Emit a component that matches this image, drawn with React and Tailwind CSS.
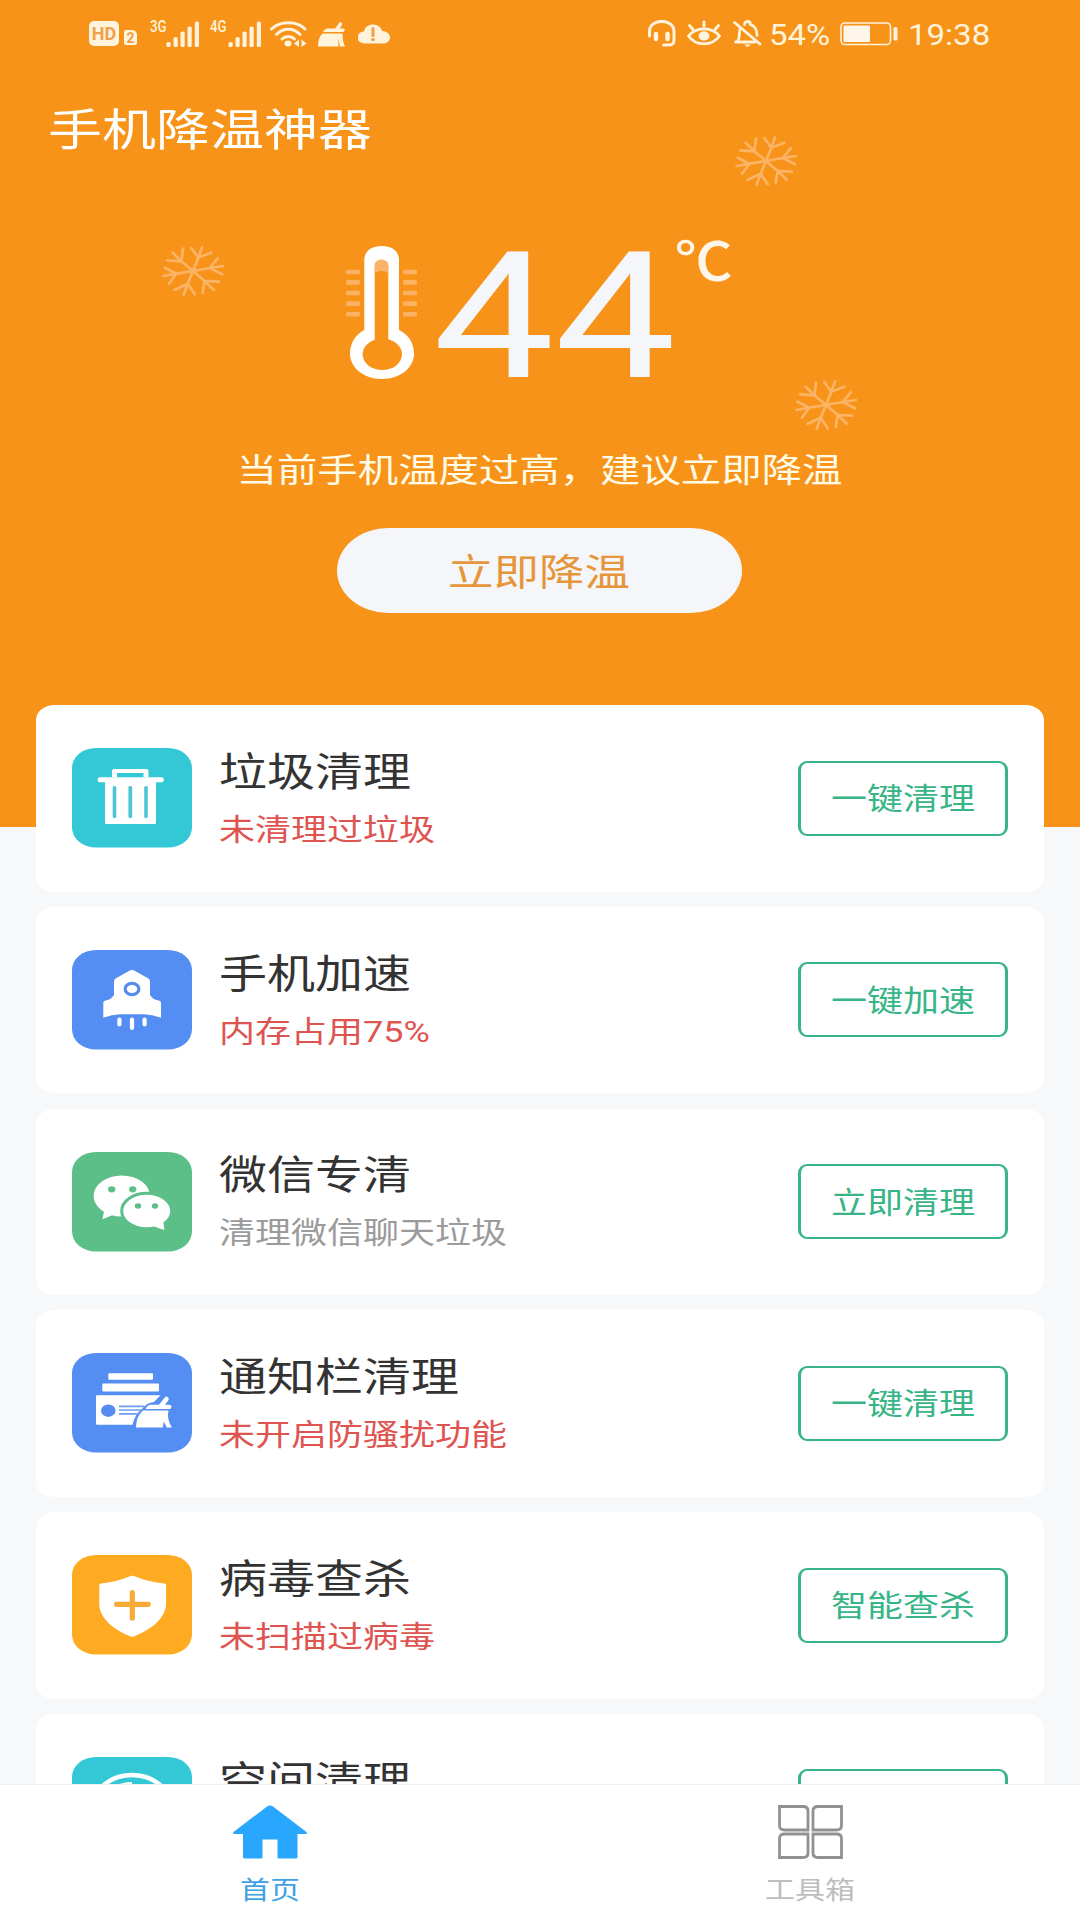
import { useState } from "react";

const ORANGE = "#f79319";
const CREAM = "#fff3dc";

function Label({ className = "", children }) {
  return (
    <span className={`inline-block whitespace-nowrap pt-[3px] leading-none scale-y-82 ${className}`}>
      {children}
    </span>
  );
}

function SignalBars() {
  return (
    <svg width="34" height="26" viewBox="0 0 34 26" fill={CREAM}>
      <rect x="0.5" y="21" width="4.2" height="5" rx="1.6" />
      <rect x="7.5" y="16" width="4.2" height="10" rx="1.6" />
      <rect x="14.5" y="10.5" width="4.2" height="15.5" rx="1.6" />
      <rect x="21.5" y="5.5" width="4.2" height="20.5" rx="1.6" />
      <rect x="28.8" y="0.5" width="4.2" height="25.5" rx="1.6" />
    </svg>
  );
}

function NetworkType({ className = "", children }) {
  return (
    <div className={`-mt-[13px] ${className}`}>
      <span className="inline-block origin-left scale-x-78 text-[17px] font-medium leading-none">
        {children}
      </span>
    </div>
  );
}

function StatusBar() {
  return (
    <div className="flex h-[67px] items-center justify-between pl-[89px] pr-[89px] text-[#fff3dc]">
      <div className="flex items-center">
        <div className="flex h-[25px] w-[30px] items-center justify-center rounded-[5px] bg-[#fff3dc]">
          <span className="text-[18px] font-bold leading-none text-[#f0a04a]">HD</span>
        </div>
        <div className="mt-2 ml-[5px] flex h-[15px] w-[13px] items-center justify-center rounded-[2px] rounded-tr-[5px] bg-[#fff3dc]">
          <span className="text-[14px] font-bold leading-none text-[#f0a04a]">2</span>
        </div>
        <NetworkType className="ml-[13px] w-[16px]">3G</NetworkType>
        <SignalBars />
        <NetworkType className="ml-[10px] w-[18px]">4G</NetworkType>
        <SignalBars />
        <svg className="ml-[8px]" width="37" height="26" viewBox="0 0 37 26" fill="none" stroke={CREAM} strokeLinecap="round">
          <path d="M1.500 8C10 -0.500 27 -0.500 35 8" strokeWidth="3" />
          <path d="M6.500 13.500C13 6.500 24 6.500 30 13.500" strokeWidth="3" />
          <path d="M12 18C15.500 14.500 21 14.500 24.500 18" strokeWidth="3" />
          <ellipse cx="18" cy="22.500" rx="3.500" ry="2.900" fill={CREAM} stroke="none" />
          <path d="M29 18.500v7.500l-5-3.500zM31.500 18.500v7.500l5-3.500z" fill={CREAM} stroke="none" />
        </svg>
        <svg className="ml-[11px]" width="28" height="26" viewBox="0 0 28 26" fill={CREAM}>
          <path d="M22.500 3L18.500 9" stroke={CREAM} strokeWidth="3.600" strokeLinecap="round" />
          <path d="M9 7.500h17q1.500 1.500-.5 3.500H5q1-3 4-3.500z" />
          <path d="M4.500 12.500h20q0 8 2.500 13h-5l-2-8 .5 8H0q0-9 4.500-13z" />
        </svg>
        <svg className="mt-[1px] ml-[12px]" width="32" height="20" viewBox="0 0 32 20" fill={CREAM}>
          <path d="M7 19.500a7 6 0 0 1-1-12C7 2.500 11 .5 15 .5c5 0 8.500 3 9 6.500 5 0 8 3 8 6.500s-3 6-7 6z" />
          <path d="M15 4.500v7" stroke="#f0a04a" strokeWidth="3" strokeLinecap="round" />
          <circle cx="15" cy="15.500" r="1.800" fill="#f0a04a" />
        </svg>
      </div>

      <div className="flex items-center">
        <svg width="29" height="27" viewBox="0 0 29 27" fill="none" stroke={CREAM} strokeWidth="3" strokeLinecap="round">
          <path d="M1.500 16V11.500C1.500 -2 26 -2 26 11.500V20c0 3.500-2 5-5 5H15.500" />
          <path d="M8 14v5M19.500 14v5" strokeWidth="4.500" />
        </svg>
        <svg className="ml-[10px]" width="34" height="27" viewBox="0 0 34 27" fill="none" stroke={CREAM} strokeWidth="2.800" strokeLinecap="round">
          <path d="M1.500 16C9 6.500 25 6.500 32.500 16 25 26.500 9 26.500 1.500 16z" />
          <path d="M17 7V2M6 9.500L2.500 5.500M28 9.500l3.500-4" />
          <ellipse cx="17" cy="16" rx="5.500" ry="4.700" fill={CREAM} stroke="none" />
        </svg>
        <svg className="ml-[12px]" width="29" height="27" viewBox="0 0 29 27" fill="none" stroke={CREAM} strokeWidth="2.800" strokeLinecap="round">
          <path d="M1.500 2.500L27 24" />
          <path d="M2.500 22h19.500M4.500 21.500c3-4 1-8 2.500-12M11.500 4.500c0-4 6-4 6 0 5 2 6.500 5 6.500 11" />
          <path d="M11 24.500h7l-3.500 2.500z" fill={CREAM} stroke="none" />
        </svg>
        <Label className="ml-[7px] w-[62px] pt-[1px] text-[33px] scale-y-88">54%</Label>
        <svg className="mt-[1px] ml-[9px]" width="59" height="24" viewBox="0 0 59 24" fill="none">
          <rect x="1" y="1" width="49.500" height="21.500" rx="4" stroke={CREAM} strokeWidth="1.600" />
          <rect x="3.500" y="3.500" width="26.500" height="16.500" rx="1" fill="#fff6ea" />
          <rect x="53.500" y="5" width="4" height="13.500" rx="1.500" fill={CREAM} />
        </svg>
        <Label className="ml-[9px] w-[83px] pt-[1px] text-[33px] scale-y-88">19:38</Label>
      </div>
    </div>
  );
}

function Snowflake({ className }) {
  return (
    <svg
      className={`absolute ${className}`}
      width="62"
      height="50"
      viewBox="0 0 62 50"
      fill="none"
      stroke="#fbb466"
      strokeWidth="2.700"
      strokeLinecap="round"
    >
      <path d="M31 25L36.300 11.700 40 1.500M29.300 2l7 9.700 13-5" />
      <path d="M31 25l16.700-3L61 20M55.700 12.300l-8 9.700L60 28.300" />
      <path d="M31 25l11.700 10 9 8.700M57 35.700L42.700 35l-2 12" />
      <path d="M31 25l-5.300 12.700L21.700 48.500M32.700 48.300l-7-10.600-13 6" />
      <path d="M31 25l-16.700 2.700L1.500 30M2.700 21.700l11.600 6L7 37.700" />
      <path d="M31 25L19.300 15.300 10.700 6.700M21 2.700l-1.700 12.600-14-1" />
    </svg>
  );
}

function Thermometer() {
  const ticks = [26, 36.4, 47, 57.6, 68.2];
  return (
    <svg width="71" height="134" viewBox="0 0 71 134">
      <path
        d="M18.300 84V14.500C18.300 5 25 0 35.700 0S53 5 53 14.500V84C62 88 68 97 68 107.500 68 122 54 133 36 133S4 122 4 107.500C4 97 10 88 18.300 84z"
        fill="#fff"
      />
      <path d="M28.700 94V20c0-8.500 13.600-8.500 13.600 0v74z" fill={ORANGE} />
      <ellipse cx="36.300" cy="108.300" rx="19.700" ry="15.700" fill={ORANGE} />
      <path d="M28.700 29V20c0-8.500 13.600-8.500 13.600 0v9c-1-5.500-12.600-5.500-13.600 0z" fill="#fab168" />
      {ticks.map((y) => (
        <g key={y} fill="#fcb263">
          <rect x="0" y={y - 2.3} width="14" height="4.600" rx="1.500" />
          <rect x="57" y={y - 2.3} width="14" height="4.600" rx="1.500" />
        </g>
      ))}
    </svg>
  );
}

function TrashIcon() {
  return (
    <g fill="#fff">
      <path d="M42 21h32.500q2 0 2 2v6.300h-5V25H45v4.300h-5V23q0-2 2-2z" />
      <rect x="25.700" y="29.300" width="66" height="5" rx="2" />
      <path d="M33 33h51v41.500q0 1.500-1.500 1.500h-48Q33 76 33 74.500z" />
      <g fill="#4fc4d2">
        <rect x="40.700" y="38" width="3.600" height="32" rx="1.500" />
        <rect x="56.400" y="38" width="3.800" height="32" rx="1.500" />
        <rect x="72.200" y="38" width="3.600" height="32" rx="1.500" />
      </g>
    </g>
  );
}

function RocketIcon() {
  return (
    <g fill="#fff">
      <path d="M60 20q1.500 0 3 1l13.500 7.500q1.500 1 1.500 3V45q3 5 9.500 5.700 1.500.3 1.500 2V67.800Q80 64.500 72 64.300H48q-8 .2-16.700 3.500V52.700q0-1.700 1.500-2Q39 50 42 45V31.500q0-2 1.500-3L57 21q1.500-1 3-1z" />
      <ellipse cx="60" cy="39" rx="6.900" ry="5.600" stroke="#548cf0" strokeWidth="3.200" />
      <path d="M47.400 69.500v5M60 69.500v8.500M72.600 69.500v5" stroke="#fff" strokeWidth="4.200" strokeLinecap="round" />
    </g>
  );
}

function WechatIcon() {
  return (
    <g fill="#fff">
      <ellipse cx="49.800" cy="44" rx="28.200" ry="20.500" />
      <path d="M32.500 57L30.500 67.300 43 62z" />
      <ellipse cx="74.700" cy="59" rx="25" ry="17.800" stroke="#5dbf88" strokeWidth="3" />
      <path d="M82 74.500l10.500 3.500-1.500-9.500z" />
      <g fill="#5dbf88">
        <ellipse cx="39.700" cy="37.300" rx="3.700" ry="3.100" />
        <ellipse cx="60.700" cy="37.300" rx="3.700" ry="3.100" />
        <ellipse cx="66" cy="54" rx="3.200" ry="2.800" />
        <ellipse cx="83" cy="54" rx="3.200" ry="2.800" />
      </g>
    </g>
  );
}

function NoticeIcon() {
  return (
    <g fill="#fff">
      <rect x="36.300" y="20.300" width="44.700" height="6.500" rx="1" />
      <rect x="30.300" y="30.500" width="56.700" height="8" rx="1" />
      <path d="M25 42.300h63.500L82 49q-8 1-12 7-7 5-9.500 15.700H25q-1 0-1-1V43.300q0-1 1-1z" />
      <ellipse cx="36.300" cy="57.700" rx="7.300" ry="6.200" fill="#548cf0" />
      <path d="M47 53.300h25M47 57h22M47 60.800h18" stroke="#6f9df3" strokeWidth="1.700" />
      <path d="M94.500 46L89 53" stroke="#fff" strokeWidth="4.500" strokeLinecap="round" />
      <path d="M78 51.800h19q3 0 2.300 2.200l-.8 2H73.500q1-3.200 4.500-4.200z" />
      <path d="M71 57.500h25.500q-2 8 3.300 17h-5l-3-6-1 6H64q0-11 7-17z" />
    </g>
  );
}

function ShieldIcon() {
  return (
    <g>
      <path
        d="M58.500 21q1.800-.7 3.600 0Q76 27 92.500 28.500q1.500.2 1.500 1.500V49c0 15-17 26.500-32 32.500q-1.700.7-3.400 0C43.500 75.500 27.300 64 27.300 49V30q0-1.300 1.500-1.500Q44.500 27 58.500 21z"
        fill="#fff"
      />
      <path d="M60.300 37.500v25.500M44.500 49.300h31.700" stroke="#f7ab35" strokeWidth="5.200" strokeLinecap="round" />
    </g>
  );
}

function StorageIcon() {
  return (
    <g fill="none" stroke="#fff">
      <ellipse cx="60" cy="49" rx="38" ry="31" strokeWidth="4.500" />
      <path d="M60 49V25c-10 0-17 3-22 8z" fill="#fff" stroke="none" />
    </g>
  );
}

const features = [
  { title: "垃圾清理", desc: "未清理过垃圾", action: "一键清理", alert: true, bg: "#34c8d7", Icon: TrashIcon },
  { title: "手机加速", desc: "内存占用75%", action: "一键加速", alert: true, bg: "#548ef3", Icon: RocketIcon },
  { title: "微信专清", desc: "清理微信聊天垃圾", action: "立即清理", alert: false, bg: "#5dbf88", Icon: WechatIcon },
  { title: "通知栏清理", desc: "未开启防骚扰功能", action: "一键清理", alert: true, bg: "#548ef3", Icon: NoticeIcon },
  { title: "病毒查杀", desc: "未扫描过病毒", action: "智能查杀", alert: true, bg: "#ffab22", Icon: ShieldIcon },
  { title: "空间清理", desc: "", action: "", alert: false, bg: "#34c8d7", Icon: StorageIcon },
];

function FeatureCard({ title, desc, action, alert, bg, Icon }) {
  return (
    <div className="flex h-[186.600px] shrink-0 items-center rounded-[18px/15px] bg-white px-9">
      <svg width="120" height="100" viewBox="0 0 120 100" className="-mt-[0.500px] shrink-0">
        <rect width="120" height="99.500" rx="24" ry="20" fill={bg} />
        <Icon />
      </svg>

      <div className="ml-[27px] flex flex-1 flex-col gap-[20px]">
        <div className="flex h-10 items-center">
          <Label className="text-[48px] text-[#333333]">{title}</Label>
        </div>
        <div className="flex h-[34px] items-center">
          <Label className={`text-[36px] ${alert ? "text-[#de5451]" : "text-[#9b9b9b]"}`}>
            {desc}
          </Label>
        </div>
      </div>

      <button
        type="button"
        className="-mt-[0.500px] flex h-[75px] w-[210px] items-center justify-center rounded-[9px] border-x-[3px] border-y-[2.500px] border-[#38b587]"
      >
        <Label className="pt-[4px] text-[36px] text-[#38b587]">{action}</Label>
      </button>
    </div>
  );
}

function App() {
  const [tab, setTab] = useState("home");

  return (
    <div className="flex h-[1920px] w-[1080px] flex-col overflow-hidden bg-[#f7f8fa] font-['Roboto','Noto_Sans_CJK_SC',sans-serif]">
      <main className="flex min-h-0 flex-1 flex-col overflow-hidden">

        {/* Header */}
        <header className="relative h-[827px] shrink-0 bg-[#f79319]">
          <StatusBar />
          <div className="flex h-[127px] items-center pl-[48px]">
            <Label className="text-[54px] text-white">手机降温神器</Label>
          </div>

          {/* Temperature */}
          <div className="mt-[46px] flex h-[146px] items-start pl-[346px]">
            <div className="mt-[6px]">
              <Thermometer />
            </div>
            <div className="ml-[16px] flex h-[146px] items-center">
              <Label className="pt-[10px] text-[216px] text-[#f5f6fa]">44</Label>
            </div>
            <Label className="-mt-[9px] -ml-[1px] text-[58px] font-medium text-[#fff6ea] scale-y-93">℃</Label>
          </div>

          <div className="mt-[62px] flex h-[44px] items-center justify-center pr-[1px]">
            <Label className="pt-[5px] text-[40.400px] text-[#fffbe6]">当前手机温度过高，建议立即降温</Label>
          </div>
          <div className="mt-[36px] flex justify-center pr-[2px]">
            <button
              type="button"
              className="flex h-[85px] w-[405px] items-center justify-center rounded-[52px/43px] bg-[#f5f6fa]"
            >
              <Label className="pt-[7px] text-[45.500px] text-[#e6963a]">立即降温</Label>
            </button>
          </div>

          <Snowflake className="left-[162px] top-[246px]" />
          <Snowflake className="left-[735px] top-[136px]" />
          <Snowflake className="left-[795px] top-[380px]" />
        </header>

        {/* Feature list */}
        <section className="relative -mt-[122px] flex flex-col gap-[15.200px] px-9">
          {features.map((item) => (
            <FeatureCard key={item.title} {...item} />
          ))}
        </section>
      </main>

      {/* Bottom tabs */}
      <nav className="flex h-[136px] shrink-0 border-t border-[#eef0f3] bg-white">
        <button type="button" onClick={() => setTab("home")} className="flex flex-1 flex-col items-center pt-5">
          <svg width="74" height="54" viewBox="0 0 74 54" fill={tab === "home" ? "#29a7ff" : "#8f8f8f"}>
            <path d="M34 1.500q3-2 6 0L73.500 27q1 1.500-.5 2h-8.500v23q0 1.500-1.500 1.500H46q-1.500 0-1.500-1.500V34.500h-15V52q0 1.500-1.500 1.500H11.500Q10 53.500 10 52V29H1Q-.5 28.500.5 27z" />
          </svg>
          <div className="mt-[14px] flex h-[32px] items-center">
            <Label className="text-[30px] text-[#3da2e4]">首页</Label>
          </div>
        </button>
        <button type="button" onClick={() => setTab("tools")} className="flex flex-1 flex-col items-center pt-5">
          <svg width="65" height="54" viewBox="0 0 65 54" fill="none" stroke={tab === "tools" ? "#29a7ff" : "#919191"} strokeWidth="2.800">
            <path d="M1.500 1.500H25q5 0 5 4.500v19H6.500q-5 0-5-4.500z" />
            <path d="M63.500 1.500H40q-5 0-5 4.500v19h23.500q5 0 5-4.500z" />
            <path d="M1.500 52.500H25q5 0 5-4.500V29H6.500q-5 0-5 4.500z" />
            <path d="M63.500 52.500H40q-5 0-5-4.500V29h23.500q5 0 5 4.500z" />
          </svg>
          <div className="mt-[14px] flex h-[32px] items-center">
            <Label className="text-[30px] text-[#bdbdbd]">工具箱</Label>
          </div>
        </button>
      </nav>
    </div>
  );
}

export default App;
